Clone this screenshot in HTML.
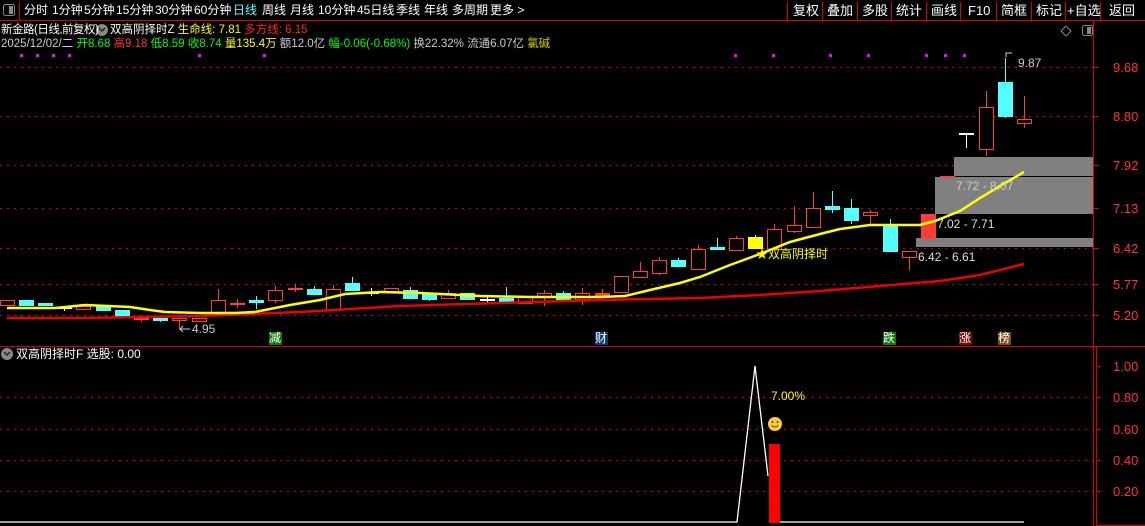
<!DOCTYPE html>
<html><head><meta charset="utf-8"><style>
body{margin:0;background:#000;width:1145px;height:526px;overflow:hidden;position:relative;font-family:"Liberation Sans","Noto Sans CJK SC",sans-serif;}
.t{position:absolute;white-space:nowrap;font-size:13px;line-height:15px;color:#fff}
.s{font-size:12px}
.h{font-size:11.5px}
.b{font-size:12px;top:3px}
</style></head><body>
<svg width="1145" height="526" style="position:absolute;left:0;top:0" id="sv">
<g stroke="#d00" stroke-width="1" fill="none">
<line x1="0" y1="20.5" x2="1145" y2="20.5"/>
<line x1="19.5" y1="2" x2="19.5" y2="20"/>
<line x1="787.5" y1="2" x2="787.5" y2="20"/><line x1="822.5" y1="2" x2="822.5" y2="20"/><line x1="857.5" y1="2" x2="857.5" y2="20"/><line x1="891.5" y1="2" x2="891.5" y2="20"/><line x1="926.5" y1="2" x2="926.5" y2="20"/><line x1="960.5" y1="2" x2="960.5" y2="20"/><line x1="996.5" y1="2" x2="996.5" y2="20"/><line x1="1031.5" y1="2" x2="1031.5" y2="20"/><line x1="1065.5" y1="2" x2="1065.5" y2="20"/><line x1="1100.5" y1="2" x2="1100.5" y2="20"/>
<line x1="1093.5" y1="20" x2="1093.5" y2="526"/>
<line x1="1096.5" y1="347" x2="1096.5" y2="526"/>
<line x1="0" y1="346.5" x2="1145" y2="346.5"/>
<line x1="1096" y1="525.5" x2="1145" y2="525.5"/>
</g>
<g stroke="#c00" stroke-dasharray="2,5" stroke-width="1">
<line x1="0" y1="67.5" x2="1093" y2="67.5"/><line x1="0" y1="116.5" x2="1093" y2="116.5"/><line x1="0" y1="165.5" x2="1093" y2="165.5"/><line x1="0" y1="208.5" x2="1093" y2="208.5"/><line x1="0" y1="248.5" x2="1093" y2="248.5"/><line x1="0" y1="284.5" x2="1093" y2="284.5"/><line x1="0" y1="315.5" x2="1093" y2="315.5"/>
<line x1="0" y1="397.5" x2="1093" y2="397.5"/><line x1="0" y1="429.5" x2="1093" y2="429.5"/><line x1="0" y1="460.5" x2="1093" y2="460.5"/><line x1="0" y1="491.5" x2="1093" y2="491.5"/>
</g>
<g stroke="#d00"><line x1="1093" y1="67.5" x2="1099" y2="67.5"/><line x1="1093" y1="116.5" x2="1099" y2="116.5"/><line x1="1093" y1="165.5" x2="1099" y2="165.5"/><line x1="1093" y1="208.5" x2="1099" y2="208.5"/><line x1="1093" y1="248.5" x2="1099" y2="248.5"/><line x1="1093" y1="284.5" x2="1099" y2="284.5"/><line x1="1093" y1="315.5" x2="1099" y2="315.5"/>
<line x1="1096" y1="366.5" x2="1101" y2="366.5"/><line x1="1096" y1="397.5" x2="1101" y2="397.5"/><line x1="1096" y1="429.5" x2="1101" y2="429.5"/><line x1="1096" y1="460.5" x2="1101" y2="460.5"/><line x1="1096" y1="491.5" x2="1101" y2="491.5"/></g>
<rect x="3.5" y="4.5" width="11" height="11" rx="2" fill="none" stroke="#888"/><rect x="9" y="6" width="4" height="8" fill="#888"/>
<rect x="1082.5" y="25.5" width="10" height="10" rx="2" fill="none" stroke="#888"/><rect x="1087" y="27" width="4" height="7" fill="#888"/>
<path d="M1066 26l5 5-5 5-5-5z" fill="none" stroke="#888"/>
<g fill="#f0f">
<rect x="20" y="54" width="3" height="3"/><rect x="36" y="54" width="3" height="3"/><rect x="52" y="54" width="3" height="3"/><rect x="68" y="54" width="3" height="3"/><rect x="198" y="54" width="3" height="3"/><rect x="263" y="54" width="3" height="3"/><rect x="734" y="54" width="3" height="3"/><rect x="772" y="54" width="3" height="3"/><rect x="829" y="54" width="3" height="3"/><rect x="867" y="54" width="3" height="3"/><rect x="925" y="54" width="3" height="3"/><rect x="944" y="54" width="3" height="3"/><rect x="963" y="54" width="3" height="3"/></g>
<rect x="954" y="157" width="139" height="19" fill="#808080"/>
<rect x="935" y="177" width="158" height="37" fill="#808080"/>
<rect x="916" y="238" width="177" height="9" fill="#808080"/>
<g id="cd"></g>
<polyline fill="none" stroke="#e00" stroke-width="2.5" points="7,318 80,318 200,316 300,312 400,306 500,303 600,300 700,298 760,295 820,291 880,286 940,281 980,275 1024,264"/>
<polyline fill="none" stroke="#ff0" stroke-width="2.5" points="7,308 55,308 85,305 130,307 150,310 165,312 200,313 235,313 255,312 290,305 320,300 345,294 380,292 420,293 480,296 530,297 600,297 625,296 650,290 680,283 700,277 730,265 760,254 790,242 820,234 840,229 870,225 885,225 920,225 935,221 960,211 980,198 1000,186 1024,172"/>
<path d="M180 329h10M180 329l3-3M180 329l3 3" stroke="#ccc" fill="none"/>
<path d="M1006 57v-4h6" stroke="#ccc" fill="none"/>
<rect x="269" y="332" width="13" height="13" fill="#0a7a0a"/><rect x="595" y="332" width="13" height="13" fill="#0c3a7a"/><rect x="883" y="332" width="13" height="13" fill="#0a7a0a"/><rect x="959" y="332" width="13" height="13" fill="#7a0a0a"/><rect x="998" y="332" width="13" height="13" fill="#7a4a10"/>
<polyline fill="none" stroke="#fff" stroke-width="1.3" points="0,522 737,522 755,366 768,476"/>
<line x1="780" y1="522" x2="1024" y2="522" stroke="#fff" stroke-width="1.3"/>
<rect x="769" y="444" width="11" height="79" fill="#f00"/>
<circle cx="775" cy="424" r="7" fill="#fc3"/><circle cx="772.5" cy="422" r="1" fill="#630"/><circle cx="777.5" cy="422" r="1" fill="#630"/><path d="M771.5 425.5q3.5 3 7 0" stroke="#630" fill="none"/>
<circle cx="7" cy="354" r="6" fill="#888"/><path d="M4 352l3 3 3-3" stroke="#222" fill="none" stroke-width="1.5"/>
<circle cx="102" cy="30" r="6" fill="#888"/><path d="M99 28l3 3 3-3" stroke="#222" fill="none" stroke-width="1.5"/>
</svg>
<script>
var C=[[7,300,305,0,'r'],[26,300,305,0,'c'],[45,303,305,0,'c'],[64,307,308,0,'w',306,311],[83,306,309,0,'r'],[103,305,310,0,'c'],[122,310,316,0,'c'],[141,317,319,1,'r',316,322],[160,318,320,0,'c',316,322],[179,318,320,0,'r',316,330],[199,318,321,0,'r'],[218,300,313,0,'r',289,313],[237,303,304,1,'r',299,308],[256,300,302,0,'c',296,309],[275,290,300,0,'r',286,303],[295,288,289,1,'r',284,292],[314,289,294,0,'c',286,295],[333,289,310,0,'r',285,310],[352,283,290,0,'c',277,290],[371,292,293,0,'w',288,296],[391,288,292,0,'r'],[410,290,298,0,'c',287,298],[429,293,299,0,'c',293,301],[448,293,298,0,'r',290,298],[467,293,299,0,'c'],[487,299,300,0,'w',297,303],[506,298,302,0,'c',287,302],[525,297,303,0,'r'],[544,293,297,0,'r',290,306],[563,293,299,0,'c',291,301],[582,293,299,0,'r',288,305],[602,293,295,1,'r',289,295],[621,276,292,0,'r'],[640,271,277,0,'r',262,277],[659,260,273,0,'r',257,275],[678,260,266,0,'c',258,266],[698,249,269,0,'r',245,269],[717,247,249,0,'c',238,250],[736,238,250,0,'r',236,251],[755,237,248,1,'y',235,249],[774,229,249,0,'r',224,249],[794,225,231,0,'r',206,233],[813,208,227,0,'r',192,227],[832,206,209,0,'c',191,213],[851,208,220,0,'c',199,224],[870,212,215,0,'r',210,225],[890,226,251,0,'c',219,251],[909,251,257,0,'r',251,270],[928,214,238,1,'r',214,238],[947,176,177,1,'r'],[966,133,134,0,'w',133,148],[986,107,149,0,'r',91,156],[1005,82,116,0,'c',58,118],[1024,119,123,0,'r',96,128]];
var g=document.getElementById('cd'),h='';
var col={r:'#ff3b3b',c:'#54ffff',w:'#fff',y:'#ff0'};
C.forEach(function(k){var x=k[0],t=k[1],b=k[2],f=k[3],c=col[k[4]];var hi=k[5]||t,lo=k[6]||b;
h+='<line x1="'+(x+0.5)+'" y1="'+hi+'" x2="'+(x+0.5)+'" y2="'+lo+'" stroke="'+c+'"/>';
var hh=Math.max(b-t,1);
if(k[4]=='r'&&!f)h+='<rect x="'+(x-7+0.5)+'" y="'+(t+0.5)+'" width="14" height="'+hh+'" fill="#000" stroke="'+c+'"/>';
else h+='<rect x="'+(x-7)+'" y="'+t+'" width="15" height="'+(hh+(f||k[4]!='r'?1:0))+'" fill="'+c+'"/>';});
g.innerHTML=h;
</script>
<div class="t b" style="left:24px">分时</div><div class="t b" style="left:52px">1分钟</div><div class="t b" style="left:84px">5分钟</div><div class="t b" style="left:116px">15分钟</div><div class="t b" style="left:155px">30分钟</div><div class="t b" style="left:194px">60分钟</div><div class="t b" style="left:233px;color:#5ff">日线</div><div class="t b" style="left:262px">周线</div><div class="t b" style="left:290px">月线</div><div class="t b" style="left:318px">10分钟</div><div class="t b" style="left:357px">45日线</div><div class="t b" style="left:396px">季线</div><div class="t b" style="left:424px">年线</div><div class="t b" style="left:452px">多周期</div><div class="t b" style="left:490px">更多 &gt;</div>
<div class="t" style="top:3px;left:793px">复权</div><div class="t" style="top:3px;left:827px">叠加</div><div class="t" style="top:3px;left:862px">多股</div><div class="t" style="top:3px;left:896px">统计</div><div class="t" style="top:3px;left:931px">画线</div><div class="t" style="top:3px;left:968px">F10</div><div class="t" style="top:3px;left:1001px">简框</div><div class="t" style="top:3px;left:1036px">标记</div><div class="t" style="top:3px;left:1067px">+自选</div><div class="t" style="top:3px;left:1109px">返回</div>
<div class="t h" style="top:23px;left:1px;letter-spacing:-0.5px">新金路(日线,前复权)</div>
<div class="t h" style="top:23px;left:110px">双高阴择时Z <span style="color:#ff0">生命线: 7.81</span> <span style="color:#f22">多方线: 6.15</span></div>
<div class="t h" style="top:37px;left:1px;color:#ccc">2025/12/02/二 <span style="color:#0f0">开8.68</span> <span style="color:#f33">高9.18</span> <span style="color:#0f0">低8.59</span> <span style="color:#0f0">收8.74</span> <span style="color:#ff0">量135.4万</span> 额12.0亿 <span style="color:#0f0">幅-0.06(-0.68%)</span> 换22.32% 流通6.07亿 <span style="color:#cc0">氯碱</span></div>
<div class="t" style="top:60px;left:1113px;color:#f33">9.68</div><div class="t" style="top:109px;left:1113px;color:#f33">8.80</div><div class="t" style="top:158px;left:1113px;color:#f33">7.92</div><div class="t" style="top:201px;left:1113px;color:#f33">7.13</div><div class="t" style="top:241px;left:1113px;color:#f33">6.42</div><div class="t" style="top:277px;left:1113px;color:#f33">5.77</div><div class="t" style="top:308px;left:1113px;color:#f33">5.20</div>
<div class="t" style="top:359px;left:1113px;color:#f33">1.00</div><div class="t" style="top:390px;left:1113px;color:#f33">0.80</div><div class="t" style="top:422px;left:1113px;color:#f33">0.60</div><div class="t" style="top:453px;left:1113px;color:#f33">0.40</div><div class="t" style="top:484px;left:1113px;color:#f33">0.20</div>
<div class="t s" style="top:322px;left:192px;color:#ccc">4.95</div>
<div class="t s" style="top:56px;left:1018px;color:#ccc">9.87</div>
<div class="t s" style="top:179px;left:956px;color:#ccc">7.72 - 8.07</div>
<div class="t s" style="top:217px;left:937px;color:#ddd">7.02 - 7.71</div>
<div class="t s" style="top:250px;left:918px;color:#ddd">6.42 - 6.61</div>
<div class="t s" style="top:247px;left:756px;color:#ff0">★双高阴择时</div>
<div class="t s" style="top:331px;left:269px">减</div><div class="t s" style="top:331px;left:595px">财</div><div class="t s" style="top:331px;left:883px">跌</div><div class="t s" style="top:331px;left:959px">涨</div><div class="t s" style="top:331px;left:998px">榜</div>
<div class="t s" style="top:347px;left:16px">双高阴择时F 选股: 0.00</div>
<div class="t s" style="top:389px;left:771px;color:#ff0">7.00%</div>
</body></html>
